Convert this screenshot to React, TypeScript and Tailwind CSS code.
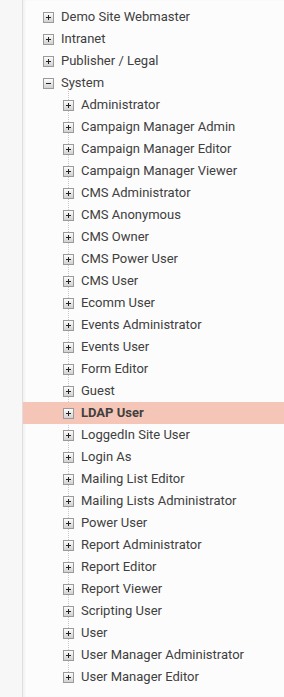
const topItems = ["Demo Site Webmaster", "Intranet", "Publisher / Legal"];

const systemChildren = [
  "Administrator",
  "Campaign Manager Admin",
  "Campaign Manager Editor",
  "Campaign Manager Viewer",
  "CMS Administrator",
  "CMS Anonymous",
  "CMS Owner",
  "CMS Power User",
  "CMS User",
  "Ecomm User",
  "Events Administrator",
  "Events User",
  "Form Editor",
  "Guest",
  "LDAP User",
  "LoggedIn Site User",
  "Login As",
  "Mailing List Editor",
  "Mailing Lists Administrator",
  "Power User",
  "Report Administrator",
  "Report Editor",
  "Report Viewer",
  "Scripting User",
  "User",
  "User Manager Administrator",
  "User Manager Editor",
];

function Toggle({ open = false }: { open?: boolean }) {
  return (
    <svg width="11" height="11" viewBox="0 0 11 11" className="shrink-0">
      <defs>
        <linearGradient id="tg" x1="0" y1="0" x2="0" y2="1">
          <stop offset="0" stopColor="#ffffff" />
          <stop offset="1" stopColor="#cfcfcf" />
        </linearGradient>
      </defs>
      <rect x="0.5" y="0.5" width="10" height="10" fill="url(#tg)" stroke="#9a9a9a" />
      <rect x="3" y="5" width="5" height="1" fill="#222" />
      {!open && <rect x="5" y="3" width="1" height="5" fill="#222" />}
    </svg>
  );
}

export default function App() {
  return (
    <div className="flex h-[697px] w-[284px] overflow-hidden bg-[#f7f7f7] font-['Roboto',sans-serif] text-[13px] text-[#404040]">
      <div className="w-[22px] shrink-0" />
      <div className="flex-1 border-l border-[#dedede] bg-[#fcfcfc] shadow-[inset_2px_0_2px_rgba(0,0,0,0.04)]">
        <ul className="pt-[6px]">
          {topItems.map((item) => (
            <li key={item} className="flex h-[22px] items-center gap-[7px] pl-[20px]">
              <Toggle />
              <span>{item}</span>
            </li>
          ))}
          <li>
            <div className="flex h-[22px] items-center gap-[7px] pl-[20px]">
              <Toggle open />
              <span>System</span>
            </div>
            <ul className="relative">
              <div className="absolute bottom-[14px] left-[45px] top-[-6px] border-l border-dotted border-[#c8c8c8]" />
              {systemChildren.map((child) => {
                const active = child === "LDAP User";
                return (
                  <li
                    key={child}
                    className={
                      active
                        ? "relative flex h-[22px] items-center gap-[7px] bg-[#f5c6b8] pl-[40px] font-bold"
                        : "relative flex h-[22px] items-center gap-[7px] pl-[40px]"
                    }
                  >
                    <Toggle />
                    <span>{child}</span>
                  </li>
                );
              })}
            </ul>
          </li>
        </ul>
      </div>
    </div>
  );
}
